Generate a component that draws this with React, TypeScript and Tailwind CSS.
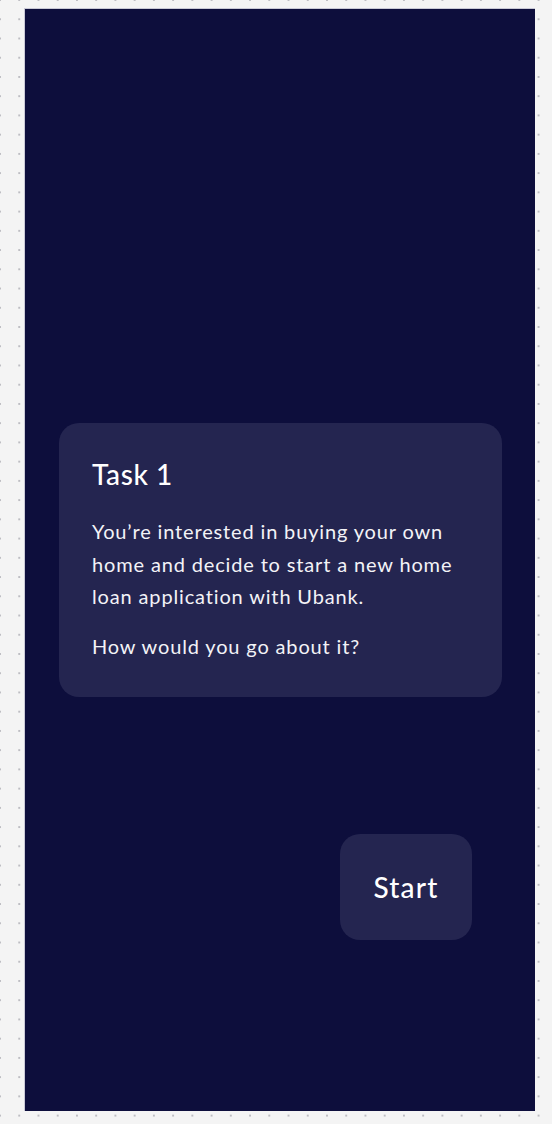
export default function App() {
  return (
    <div className="min-h-screen w-full bg-[#f4f4f4] bg-[radial-gradient(circle,#bdbdc2_0.9px,transparent_1.2px)] bg-[size:19.24px_19.24px] bg-[position:-9.62px_-9.62px] pt-2 pl-6 pr-[17px] pb-[13px] font-['Lato',sans-serif]">
      <div className="grid h-[1103px] w-[511px] grid-rows-[1fr_auto_1fr] border-l border-t border-[#c9c9d6] bg-[#0d0e3c]">
        <div />
        <div className="ml-[34px] mr-[33px] rounded-[20px] bg-[#242550] px-[33px] pt-[33px] pb-[35px] text-white">
          <h1 className="text-[28px] font-medium leading-[36px] tracking-[0.6px]">Task 1</h1>
          <p className="mt-[23px] text-[20px] leading-[32.5px] tracking-[0.85px] text-[#f3f3f7]">
            You’re interested in buying your own home and decide to start a new home loan application with Ubank.
          </p>
          <p className="mt-[17px] text-[20px] leading-[32.5px] tracking-[0.85px] text-[#f3f3f7]">
            How would you go about it?
          </p>
        </div>
        <div className="flex justify-end pr-[63px] pt-[137px]">
          <button className="flex h-[106px] w-[132px] items-center justify-center rounded-[20px] bg-[#242550] text-[28px] font-medium tracking-[1.2px] text-white">
            Start
          </button>
        </div>
      </div>
    </div>
  );
}
